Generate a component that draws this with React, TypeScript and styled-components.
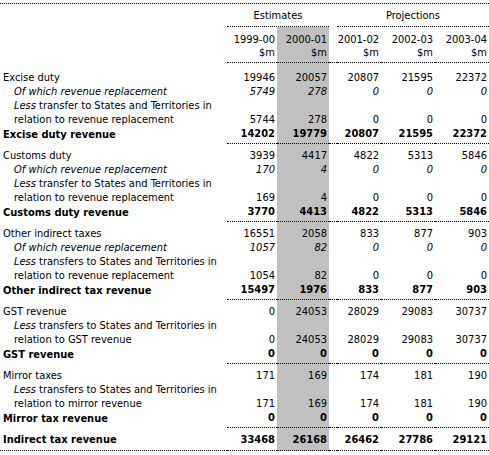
import React from 'react';
import styled, {createGlobalStyle} from 'styled-components';

const Global = createGlobalStyle`
  body {
    margin: 0;
    background: #fff;
  }
`;

const Table = styled.table`
  width: 489px;
  margin-top: 3px;
  border-collapse: separate;
  border-spacing: 0;
  table-layout: fixed;
  border-top: 1px dotted #000;
  font-family: "DejaVu Sans Condensed", "DejaVu Sans", sans-serif;
  font-size: 11px;
  line-height: 14px;
  color: #000;
`;

const Col = styled.col<{ $w: number }>`
  width: ${p => p.$w}px;
`;

const Cell = styled.td<{ $top?: number; $bottom?: number; $rule?: boolean; $shade?: boolean }>`
  padding: ${p => p.$top || 0}px 2px ${p => p.$bottom || 0}px 0;
  vertical-align: bottom;
  white-space: nowrap;
  background: ${p => (p.$shade ? '#c0c0c0' : 'transparent')};
  border-bottom: ${p => (p.$rule ? '1px dotted #000' : 'none')};
`;

const Label = styled(Cell)<{ $indent?: boolean; $bold?: boolean; $italic?: boolean }>`
  padding-left: ${p => (p.$indent ? 14 : 3)}px;
  text-align: left;
  font-weight: ${p => (p.$bold ? 700 : 400)};
  font-style: ${p => (p.$italic ? 'italic' : 'normal')};
`;

const Num = styled(Cell)<{ $bold?: boolean; $italic?: boolean }>`
  text-align: right;
  font-weight: ${p => (p.$bold ? 700 : 400)};
  font-style: ${p => (p.$italic ? 'italic' : 'normal')};
`;

const Group = styled(Cell)`
  text-align: center;
  padding-right: 0;
`;

const HeadNum = styled(Cell)`
  text-align: right;
  line-height: 13px;
`;

type Kind = 'plain' | 'italic' | 'less' | 'bold';

interface Line {
  label: React.ReactNode;
  kind: Kind;
  values: string[];
}

const less = (first: string, second: string) => (
  <>
    <i>Less</i> {first}
    <br/>
    {second}
  </>
);

const sections: Line[][] = [
  [
    {label: 'Excise duty', kind: 'plain', values: ['19946', '20057', '20807', '21595', '22372']},
    {label: 'Of which revenue replacement', kind: 'italic', values: ['5749', '278', '0', '0', '0']},
    {label: less('transfer to States and Territories in', 'relation to revenue replacement'), kind: 'less', values: ['5744', '278', '0', '0', '0']},
    {label: 'Excise duty revenue', kind: 'bold', values: ['14202', '19779', '20807', '21595', '22372']},
  ],
  [
    {label: 'Customs duty', kind: 'plain', values: ['3939', '4417', '4822', '5313', '5846']},
    {label: 'Of which revenue replacement', kind: 'italic', values: ['170', '4', '0', '0', '0']},
    {label: less('transfer to States and Territories in', 'relation to revenue replacement'), kind: 'less', values: ['169', '4', '0', '0', '0']},
    {label: 'Customs duty revenue', kind: 'bold', values: ['3770', '4413', '4822', '5313', '5846']},
  ],
  [
    {label: 'Other indirect taxes', kind: 'plain', values: ['16551', '2058', '833', '877', '903']},
    {label: 'Of which revenue replacement', kind: 'italic', values: ['1057', '82', '0', '0', '0']},
    {label: less('transfers to States and Territories in', 'relation to revenue replacement'), kind: 'less', values: ['1054', '82', '0', '0', '0']},
    {label: 'Other indirect tax revenue', kind: 'bold', values: ['15497', '1976', '833', '877', '903']},
  ],
  [
    {label: 'GST revenue', kind: 'plain', values: ['0', '24053', '28029', '29083', '30737']},
    {label: less('transfers to States and Territories in', 'relation to GST revenue'), kind: 'less', values: ['0', '24053', '28029', '29083', '30737']},
    {label: 'GST revenue', kind: 'bold', values: ['0', '0', '0', '0', '0']},
  ],
  [
    {label: 'Mirror taxes', kind: 'plain', values: ['171', '169', '174', '181', '190']},
    {label: less('transfers to States and Territories in', 'relation to mirror revenue'), kind: 'less', values: ['171', '169', '174', '181', '190']},
    {label: 'Mirror tax revenue', kind: 'bold', values: ['0', '0', '0', '0', '0']},
  ],
  [
    {label: 'Indirect tax revenue', kind: 'bold', values: ['33468', '26168', '26462', '27786', '29121']},
  ],
];

const years = ['1999-00', '2000-01', '2001-02', '2002-03', '2003-04'];
const widths = [227, 50, 52, 8, 44, 54, 54];

function App() {
  return (
    <>
      <Global/>
      <Table>
        <colgroup>
          {widths.map((w, i) => <Col key={i} $w={w}/>)}
        </colgroup>
        <tbody>
          <tr>
            <Label $top={5} $bottom={3}/>
            <Group colSpan={2} $top={5} $bottom={3} $rule>Estimates</Group>
            <Cell $top={5} $bottom={3}/>
            <Group colSpan={3} $top={5} $bottom={3} $rule>Projections</Group>
          </tr>
          <tr>
            <Label $top={6} $bottom={3}/>
            {years.map((y, i) => (
              <React.Fragment key={y}>
                {i === 2 && <Cell $top={6} $bottom={3} $rule/>}
                <HeadNum $top={6} $bottom={3} $rule $shade={i === 1}>
                  {y}<br/>$m
                </HeadNum>
              </React.Fragment>
            ))}
          </tr>
          {sections.map((rows, s) =>
            rows.map((row, r) => {
              const first = r === 0;
              const last = r === rows.length - 1;
              const final = s === sections.length - 1;
              const top = first ? (s === 0 ? 8 : 5) : 0;
              const bottom = last ? (final ? 3 : 2) : 0;
              const bold = row.kind === 'bold';
              const italic = row.kind === 'italic';
              return (
                <tr key={`${s}-${r}`}>
                  <Label
                    $top={top}
                    $bottom={bottom}
                    $rule={last && final}
                    $indent={row.kind === 'italic' || row.kind === 'less'}
                    $bold={bold}
                    $italic={italic}
                  >
                    {row.label}
                  </Label>
                  {row.values.map((v, i) => (
                    <React.Fragment key={i}>
                      {i === 2 && <Cell $top={top} $bottom={bottom} $rule={last}/>}
                      <Num
                        $top={top}
                        $bottom={bottom}
                        $rule={last}
                        $shade={i === 1}
                        $bold={bold}
                        $italic={italic}
                      >
                        {v}
                      </Num>
                    </React.Fragment>
                  ))}
                </tr>
              );
            })
          )}
        </tbody>
      </Table>
    </>
  );
}

export default App;
